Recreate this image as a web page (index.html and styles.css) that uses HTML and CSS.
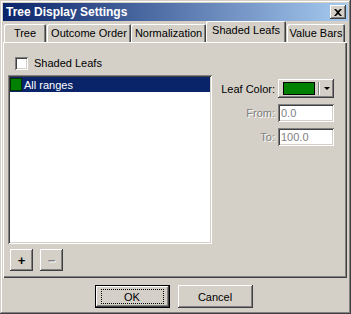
FILE: index.html
```html
<!DOCTYPE html>
<html lang="en">
<head>
  <meta charset="UTF-8">
  <title>Tree Display Settings</title>
  <link rel="stylesheet" href="styles.css">
</head>
<body>
  <div class="window">
    <div class="titlebar">
      <span class="title">Tree Display Settings</span>
      <span class="close">
        <svg width="8" height="7" viewBox="0 0 8 7"><path d="M0 0h2l2 2 2-2h2L5 3.5 8 7H6L4 5 2 7H0l3-3.5z" fill="#000"/></svg>
      </span>
    </div>
    <div class="tabs">
      <div class="tab t-tree">Tree</div>
      <div class="tab t-order">Outcome Order</div>
      <div class="tab t-norm">Normalization</div>
      <div class="tab t-shade active">Shaded Leafs</div>
      <div class="tab t-bars">Value Bars</div>
    </div>
    <div class="panel">
      <label class="check"><span class="box"></span>Shaded Leafs</label>
      <div class="content">
        <div class="list-col">
          <div class="list">
            <div class="row selected"><span class="swatch"></span>All ranges</div>
          </div>
          <div class="list-buttons">
            <div class="btn small">+</div>
            <div class="btn small disabled">&minus;</div>
          </div>
        </div>
        <div class="props">
          <span class="lbl">Leaf Color:</span>
          <div class="btn colorbtn"><span class="color"></span><span class="sep"></span><span class="arrow"></span></div>
          <span class="lbl disabled">From:</span>
          <div class="field">0.0</div>
          <span class="lbl disabled">To:</span>
          <div class="field">100.0</div>
        </div>
      </div>
    </div>
    <div class="footer">
      <div class="btn wide default"><span class="focus">OK</span></div>
      <div class="btn wide">Cancel</div>
    </div>
  </div>
</body>
</html>
```
FILE: styles.css
```css
html, body { margin: 0; height: 100%; overflow: hidden; background: #d4d0c8; }
body { font-family: 'Liberation Sans', Arial, sans-serif; font-size: 11px; color: #000; }
/* window frame */
.window {
  width: 351px; height: 314px; box-sizing: border-box; padding: 3px;
  background: #d4d0c8;
  box-shadow: inset -1px -1px #404040, inset 1px 1px #d4d0c8, inset -2px -2px #808080, inset 2px 2px #fff;
  display: flex; flex-direction: column;
}
.titlebar {
  height: 18px; display: flex; align-items: center; justify-content: space-between;
  background: linear-gradient(to right, #0a246a, #a6caf0); padding: 0 2px 0 3px;
}
.title { color: #fff; font-weight: bold; font-size: 12px; }
.close {
  width: 16px; height: 14px; background: #d4d0c8; display: flex; align-items: center; justify-content: center;
  box-shadow: inset -1px -1px #404040, inset 1px 1px #fff, inset -2px -2px #808080;
}
/* tabs */
.tabs { display: flex; align-items: flex-end; height: 21px; padding-left: 1px; position: relative; z-index: 1; }
.tab {
  height: 18px; line-height: 18px; box-sizing: border-box; text-align: center;
  box-shadow: inset 1px 1px #fff, inset -1px 0 #404040, inset -2px 0 #808080;
  border-radius: 2px 2px 0 0; white-space: nowrap;
}
.t-tree { width: 42px; margin-right: 1px; }
.t-order { width: 84px; }
.t-norm { width: 75px; }
.t-shade { width: 80px; }
.t-bars { width: 58px; margin-left: 1px; }
.tab.active { height: 21px; line-height: 19px; background: #d4d0c8; }
/* panel */
.panel {
  flex: 1; padding: 13px 6px 6px 5px;
  box-shadow: inset 1px 1px #fff, inset -1px -1px #404040, inset -2px -2px #808080;
  display: flex; flex-direction: column; width: 344px; box-sizing: border-box;
}
.check { display: flex; align-items: center; gap: 6px; padding-left: 7px; height: 16px; margin-bottom: 4px; }
.box {
  width: 13px; height: 13px; box-sizing: border-box; background: #fff;
  box-shadow: inset 1px 1px #808080, inset -1px -1px #fff, inset 2px 2px #404040, inset -2px -2px #d4d0c8;
}
.content { display: flex; flex: 1; }
.list-col { display: flex; flex-direction: column; }
.list {
  width: 204px; height: 169px; box-sizing: border-box; background: #fff; padding: 2px;
  box-shadow: inset 1px 1px #808080, inset -1px -1px #fff, inset 2px 2px #404040, inset -2px -2px #d4d0c8;
}
.row { height: 15px; display: flex; align-items: center; gap: 2px; }
.row.selected { background: #0a246a; color: #fff; }
.swatch { width: 12px; height: 13px; background: #008000; border: 1px solid #003000; box-sizing: border-box; }
.list-buttons { display: flex; gap: 7px; margin-top: 5px; padding-left: 2px; }
.btn {
  background: #d4d0c8; box-sizing: border-box; display: flex; align-items: center; justify-content: center;
  box-shadow: inset -1px -1px #404040, inset 1px 1px #fff, inset -2px -2px #808080;
}
.btn.small { width: 23px; height: 22px; font-weight: bold; font-size: 13px; }
.btn.small.disabled { color: #808080; text-shadow: 1px 1px #fff; }
/* right side */
.props {
  display: grid; grid-template-columns: auto 56px; row-gap: 6px; column-gap: 3px;
  align-items: center; align-content: start; margin-left: auto; padding-top: 4px; margin-right: 7px;
}
.lbl { text-align: right; }
.lbl.disabled { color: #808080; text-shadow: 1px 1px #fff; }
.colorbtn { height: 19px; width: 56px; justify-content: flex-start; padding: 3px; }
.color { width: 32px; height: 13px; background: #008000; border: 1px solid #000; box-sizing: border-box; margin-left: 2px; }
.sep { width: 1px; height: 13px; background: #808080; box-shadow: 1px 0 #fff; margin-left: 3px; }
.arrow { width: 0; height: 0; border: 3px solid transparent; border-top: 3px solid #000; border-bottom: 0; margin-left: 5px; }
.field {
  height: 18px; box-sizing: border-box; background: #fff; color: #808080; padding: 2px 3px; line-height: 14px;
  box-shadow: inset 1px 1px #808080, inset -1px -1px #fff, inset 2px 2px #404040, inset -2px -2px #d4d0c8;
}
/* footer */
.footer { display: flex; justify-content: center; gap: 8px; padding: 7px 0 3px; padding-right: 4px; }
.btn.wide { width: 75px; height: 23px; }
.btn.default { box-shadow: inset 0 0 0 1px #000, inset -2px -2px #404040, inset 2px 2px #fff, inset -3px -3px #808080; }
.focus { border: 1px dotted #000; width: 63px; height: 15px; display: flex; align-items: center; justify-content: center; box-sizing: border-box; }
```
